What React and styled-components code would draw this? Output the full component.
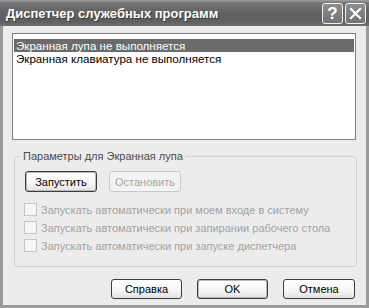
import React from "react";
import styled, { createGlobalStyle } from "styled-components";

const GlobalStyle = createGlobalStyle`
  html, body { margin: 0; padding: 0; background: #ffffff; }
  body { font-family: "Liberation Sans", Arial, sans-serif; font-size: 11px; }
  * { box-sizing: border-box; }
`;

const Window = styled.div`
  width: 369px;
  height: 308px;
  display: flex;
  flex-direction: column;
  background: #ececec;
  overflow: hidden;
`;

const TitleBar = styled.div`
  height: 26px;
  flex: none;
  display: flex;
  align-items: center;
  justify-content: space-between;
  padding: 0 3px 0 6px;
  background: linear-gradient(#a0a0a0 0%, #747474 12%, #636363 45%, #5f5f5f 80%, #6e6e6e 100%);
`;

const Title = styled.div`
  color: #ffffff;
  font-family: "Liberation Sans", Arial, sans-serif;
  font-weight: bold;
  font-size: 13px;
  text-shadow: 1px 1px 0 #3a3a3a;
`;

const CaptionButtons = styled.div`
  display: flex;
  gap: 2px;
`;

const CaptionButton = styled.div`
  width: 21px;
  height: 21px;
  border: 1px solid #f2f2f2;
  border-radius: 3px;
  background: linear-gradient(#8e8e8e, #727272);
  color: #ffffff;
  display: flex;
  align-items: center;
  justify-content: center;
  font-family: "Liberation Sans", sans-serif;
  font-weight: bold;
  font-size: 17px;
  line-height: 1;
`;

const Body = styled.div`
  flex: 1;
  display: flex;
  flex-direction: column;
  border: 3px solid #9a9a9a;
  border-top: none;
  padding: 7px 10px 0 9px;
`;

const ListBox = styled.div`
  height: 107px;
  flex: none;
  background: #ffffff;
  border: 1px solid #808080;
  padding: 5px 1px;
`;

const ListItem = styled.div`
  height: 13px;
  line-height: 13px;
  padding-left: 2px;
  font-size: 11.6px;
  white-space: nowrap;
  color: ${(p) => (p.$selected ? "#ffffff" : "#000000")};
  background: ${(p) => (p.$selected ? "#6b6b6b" : "transparent")};
`;

const GroupBox = styled.fieldset`
  margin: 10px -1px 0 2px;
  padding: 0 10px 14px 10px;
  border: 1px solid #d0d0d0;
  border-radius: 4px;
  min-width: 0;
`;

const Legend = styled.legend`
  margin-left: -4px;
  padding: 0 2px;
  color: #4a4a4a;
  font-size: 11px;
  line-height: 13px;
`;

const ActionRow = styled.div`
  display: flex;
  gap: 12px;
  margin-top: 8px;
`;

const Button = styled.div`
  width: ${(p) => p.$w || 72}px;
  height: ${(p) => p.$h || 21}px;
  display: flex;
  align-items: center;
  justify-content: center;
  border: 1px solid ${(p) => (p.$disabled ? "#c9c9c9" : "#3c3c3c")};
  border-radius: 3px;
  color: ${(p) => (p.$disabled ? "#a6a6a6" : "#000000")};
  background: ${(p) =>
    p.$disabled
      ? "#f3f3f3"
      : "linear-gradient(#ffffff 0%, #f6f6f6 60%, #e2e2e2 100%)"};
  box-shadow: ${(p) =>
    p.$default ? "inset 0 0 0 1px #b8b8b8" : "none"};
  font-size: 11px;
`;

const CheckList = styled.div`
  display: flex;
  flex-direction: column;
  gap: 5px;
  margin-top: 11px;
`;

const CheckRow = styled.div`
  display: flex;
  align-items: center;
  gap: 4px;
  height: 13px;
  margin-left: -1px;
`;

const CheckBox = styled.div`
  width: 13px;
  height: 13px;
  border: 1px solid #c6c6c6;
  background: #f6f6f6;
  flex: none;
`;

const CheckLabel = styled.span`
  color: #a2a2a2;
  white-space: nowrap;
`;

const Footer = styled.div`
  display: flex;
  justify-content: flex-end;
  gap: 15px;
  margin-top: 12px;
  padding-right: 1px;
`;

export default function App() {
  return (
    <>
      <GlobalStyle />
      <Window>
        <TitleBar>
          <Title>Диспетчер служебных программ</Title>
          <CaptionButtons>
            <CaptionButton>?</CaptionButton>
            <CaptionButton>
              <svg width="13" height="13" viewBox="0 0 13 13">
                <path d="M2 2 L11 11 M11 2 L2 11" stroke="#fff" strokeWidth="2.2" strokeLinecap="square" />
              </svg>
            </CaptionButton>
          </CaptionButtons>
        </TitleBar>
        <Body>
          <ListBox>
            <ListItem $selected>Экранная лупа не выполняется</ListItem>
            <ListItem>Экранная клавиатура не выполняется</ListItem>
          </ListBox>
          <GroupBox>
            <Legend>Параметры для Экранная лупа</Legend>
            <ActionRow>
              <Button $default>Запустить</Button>
              <Button $disabled>Остановить</Button>
            </ActionRow>
            <CheckList>
              <CheckRow>
                <CheckBox />
                <CheckLabel>Запускать автоматически при моем входе в систему</CheckLabel>
              </CheckRow>
              <CheckRow>
                <CheckBox />
                <CheckLabel>Запускать автоматически при запирании рабочего стола</CheckLabel>
              </CheckRow>
              <CheckRow>
                <CheckBox />
                <CheckLabel>Запускать автоматически при запуске диспетчера</CheckLabel>
              </CheckRow>
            </CheckList>
          </GroupBox>
          <Footer>
            <Button $w={71} $h={20}>Справка</Button>
            <Button $w={71} $h={20} $default>OK</Button>
            <Button $w={72} $h={20}>Отмена</Button>
          </Footer>
        </Body>
      </Window>
    </>
  );
}
